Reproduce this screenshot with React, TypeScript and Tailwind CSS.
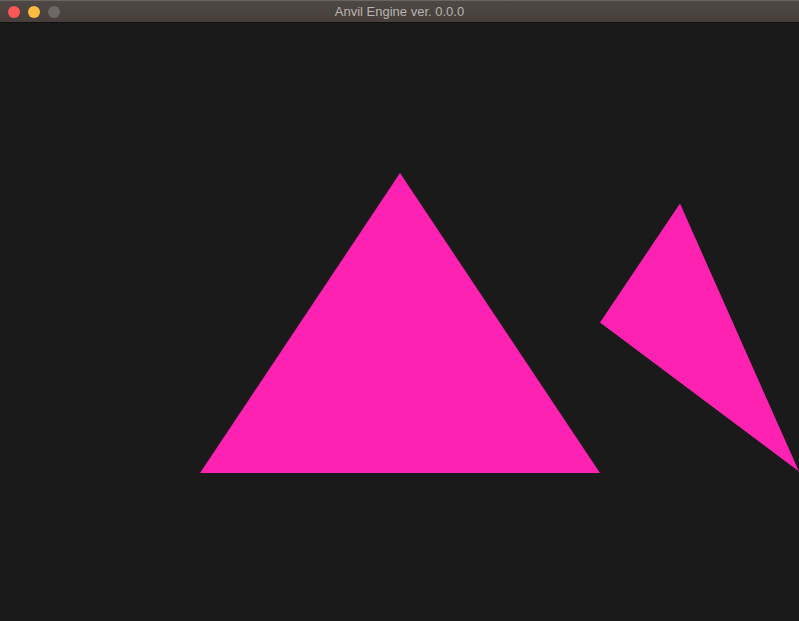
export default function App() {
  return (
    <div className="flex h-[621px] w-[799px] flex-col overflow-hidden bg-[#1a1a1a]">
      <header className="relative flex h-[22px] shrink-0 items-center justify-center border-t border-[#6b6560] bg-gradient-to-b from-[#4e4844] to-[#463f3b]">
        <div className="absolute left-[8px] top-[5px] flex gap-[8px]">
          <span className="h-[12px] w-[12px] rounded-full bg-[#fc5753]" />
          <span className="h-[12px] w-[12px] rounded-full bg-[#fdbc40]" />
          <span className="h-[12px] w-[12px] rounded-full bg-[#6d6966]" />
        </div>
        <span className="text-[13px] leading-none text-[#b9b4af] [font-family:'Liberation_Sans',Arial,sans-serif]">
          Anvil Engine ver. 0.0.0
        </span>
      </header>
      <main className="flex-1 border-t border-[#111] bg-[#1a1a1a]">
        <svg width="799" height="598" viewBox="0 23 799 598" className="block">
          <polygon points="200,473 600,473 400,173" fill="#fe22b3" />
          <polygon points="680,203.5 600,322.5 799,471.5" fill="#fe22b3" />
        </svg>
      </main>
    </div>
  );
}
